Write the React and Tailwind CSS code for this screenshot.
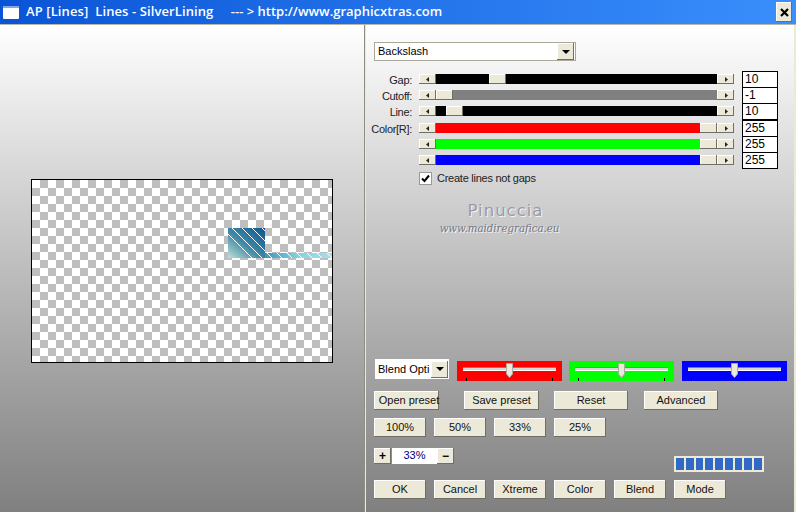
const bevel = 'bg-[#ece9d8] shadow-[inset_-1px_-1px_0_#716f64,inset_1px_1px_0_#fff]'

function Btn({ label, className = 'w-[52px]' }) {
  return (
    <button className={`h-[19px] flex items-center justify-center whitespace-nowrap text-[11px] text-[#111] ${bevel} ${className}`}>
      {label}
    </button>
  )
}

function Arrow({ dir }) {
  return (
    <div className={`w-[17px] h-[10px] flex items-center justify-center ${bevel}`}>
      <svg width="4" height="5" viewBox="0 0 4 5">
        <path d={dir === 'left' ? 'M3 0V5L0 2.5Z' : 'M1 0V5L4 2.5Z'} fill="#222" />
      </svg>
    </div>
  )
}

function Slider({ label, value, before, color, top }) {
  return (
    <div className={`flex h-4 items-start ${top}`}>
      <div className="w-[45px] whitespace-nowrap text-right text-[11px] leading-[12px] tracking-[-0.3px] text-[#222]">{label}</div>
      <div className="ml-[7px] mt-0 flex w-[315px] items-center">
        <Arrow dir="left" />
        <div className={`flex h-[10px] flex-1 ${color}`}>
          <div style={{ width: before }} />
          <div className={`w-[17px] h-[10px] ${bevel}`} />
        </div>
        <Arrow dir="right" />
      </div>
      <div className="ml-2 -mt-[3px] h-[17px] w-9 border border-black bg-white pl-[2px] text-[12px] leading-[15px] text-black">
        {value}
      </div>
    </div>
  )
}

function Track({ color, left }) {
  return (
    <div className={`relative h-5 w-[105px] ${color}`}>
      <div className="absolute left-[6px] top-[6px] h-1 w-[93px] bg-[#d8d8d0] shadow-[inset_0_1px_0_#808080,inset_0_-1px_0_#fff]" />
      <svg className="absolute top-[2px]" style={{ left }} width="7" height="15" viewBox="0 0 7 15">
        <path d="M.5.5H6.5V11L3.5 14.5L.5 11Z" fill="#ece9d8" stroke="#aaa" />
      </svg>
      <div className="absolute left-[9px] bottom-0 h-[3px] w-px bg-black" />
      <div className="absolute left-[95px] bottom-0 h-[3px] w-px bg-black" />
    </div>
  )
}

function Canvas() {
  const lines = [196, 206, 216, 226, 236, 246, 256, 266, 276, 286, 296]
  return (
    <div className="h-[184px] w-[302px] border border-black bg-white bg-[conic-gradient(#bebebe_25%,#fff_0_50%,#bebebe_0_75%,#fff_0)] bg-[size:16px_16px]">
      <svg width="300" height="182" viewBox="0 0 300 182" className="block">
        <defs>
          <linearGradient id="square" x1="0" y1="1" x2="1" y2="0">
            <stop offset="0" stopColor="#bfe0d4" />
            <stop offset="0.45" stopColor="#3f8aa8" />
            <stop offset="1" stopColor="#0b5590" />
          </linearGradient>
          <linearGradient id="strip" x1="0" y1="0" x2="1" y2="0">
            <stop offset="0" stopColor="#3f97bf" />
            <stop offset="0.5" stopColor="#7fd4ea" />
            <stop offset="1" stopColor="#a4e0ea" />
          </linearGradient>
          <clipPath id="art">
            <path d="M196 48H233V73H300V78H196Z" />
          </clipPath>
        </defs>
        <rect x="196" y="48" width="37" height="30" fill="url(#square)" />
        <rect x="233" y="73" width="67" height="5" fill="url(#strip)" />
        <g clipPath="url(#art)" stroke="#fff" strokeWidth="1">
          {lines.map((x) => (
            <path key={x} d={`M${x - 16} 38L${x + 30} 84`} />
          ))}
        </g>
      </svg>
    </div>
  )
}

export default function App() {
  return (
    <div className="h-[512px] w-[796px] overflow-hidden bg-[#ece9d8] font-['Liberation_Sans',sans-serif]">
      <div className="flex h-6 items-center bg-gradient-to-r from-[#0a54d6] to-[#3a8ffc] pl-[3px] pr-[4px]">
        <svg width="16" height="13" viewBox="0 0 16 13">
          <rect width="16" height="13" rx="1" fill="#fff" />
          <rect width="16" height="2" fill="#7fa8e8" />
        </svg>
        <div className="ml-[7px] whitespace-pre font-['Open_Sans',sans-serif] text-[13px] font-semibold text-white">
          <span className="tracking-[0.1px]">AP [Lines]  Lines - SilverLining     </span>
          --- &gt; http://www.graphicxtras.com
        </div>
        <div className={`ml-auto flex h-5 w-4 items-center justify-center ${bevel}`}>
          <svg width="9" height="9" viewBox="0 0 9 9">
            <path d="M1 1L8 8M8 1L1 8" stroke="#000" strokeWidth="2.2" />
          </svg>
        </div>
      </div>
      <div className="flex h-[488px] border-t border-[#b8b6a8] pr-[2px]">
        <div className="h-full w-[365px] border-r border-[#8c8c84] bg-gradient-to-b from-white to-[#808080] pl-[31px] pt-[154px]">
          <Canvas />
        </div>
        <div className="h-full flex-1 border-l border-[#ece9d8] bg-gradient-to-b from-white to-[#808080] pl-2">
          <div className="mt-[17px] flex h-[19px] w-[202px] items-center justify-between border border-[#aca899] bg-white pl-[3px] pr-px text-[11px] text-black">
            Backslash
            <div className={`flex h-[17px] w-[17px] items-center justify-center ${bevel}`}>
              <svg width="8" height="4" viewBox="0 0 8 4"><path d="M0 0H8L4 4Z" fill="#000" /></svg>
            </div>
          </div>
          <div className="-ml-[7px]">
            <Slider label="Gap:" value="10" before={53} color="bg-black" top="mt-[13px]" />
            <Slider label="Cutoff:" value="-1" before={0} color="bg-[#808080]" />
            <Slider label="Line:" value="10" before={10} color="bg-black" />
            <Slider label="Color[R]:" value="255" before={264} color="bg-[#ff0000]" top="mt-px" />
            <Slider label="" value="255" before={264} color="bg-[#00ff00]" />
            <Slider label="" value="255" before={264} color="bg-[#0000ff]" />
          </div>
          <div className="ml-[45px] flex h-[14px] items-center text-[11px] tracking-[-0.25px] text-[#222]">
            <div className="flex h-[13px] w-[13px] items-center justify-center border border-[#999] bg-white">
              <svg width="9" height="9" viewBox="0 0 9 9"><path d="M1 4.5L3.5 7L8 1.5" fill="none" stroke="#000" strokeWidth="2" /></svg>
            </div>
            <span className="ml-[5px]">Create lines not gaps</span>
          </div>
          <div className="ml-[65px] mt-[16px] w-[121px] text-center text-[#9a9aa6] [text-shadow:1px_1px_0_#f4f4f4]">
            <div className="ml-3 text-[16.5px] leading-[20px] tracking-[1px] font-['DejaVu_Sans',sans-serif]">Pinuccia</div>
            <div className="mt-[2px] whitespace-nowrap text-[10.2px] leading-[12px] italic text-[#777782] font-['DejaVu_Serif',serif]">www.maidiregrafica.eu</div>
          </div>
          <div className="mt-[124px] flex items-start">
            <div className="ml-px flex h-5 w-[74px] items-center border border-white bg-white pl-[2px] text-[11px] text-black">
              <span className="w-[53px] overflow-hidden whitespace-nowrap">Blend Opti</span>
              <div className={`flex h-[17px] w-[17px] shrink-0 items-center justify-center ${bevel}`}>
                <svg width="8" height="4" viewBox="0 0 8 4"><path d="M0 0H8L4 4Z" fill="#000" /></svg>
              </div>
            </div>
            <div className="ml-2 mt-[2px] flex gap-[7px]">
              <Track color="bg-[#ff0000]" left={49} />
              <div className="ml-0"><Track color="bg-[#00ff00]" left={49} /></div>
              <div className="ml-px"><Track color="bg-[#0000ff]" left={49} /></div>
            </div>
          </div>
          <div className="mt-[10px] flex">
            <Btn label="Open preset" className="w-[65px] pl-[5px]" />
            <Btn label="Save preset" className="ml-[25px] w-[75px]" />
            <Btn label="Reset" className="ml-[15px] w-[74px]" />
            <Btn label="Advanced" className="ml-4 w-[74px]" />
          </div>
          <div className="mt-2 flex gap-2">
            <Btn label="100%" />
            <Btn label="50%" />
            <Btn label="33%" />
            <Btn label="25%" />
          </div>
          <div className="mt-[11px] flex h-4">
            <button className={`h-4 w-[17px] text-[12px] font-bold leading-[14px] ${bevel}`}>+</button>
            <div className="ml-px h-4 w-[45px] bg-white text-center text-[11px] leading-[15px] text-[#000080]">33%</div>
            <button className={`h-4 w-[17px] text-[12px] font-bold leading-[14px] ${bevel}`}>−</button>
          </div>
          <div className="ml-[300px] -mt-2 flex h-4 w-[90px] gap-[2px] bg-[#ece9d8] p-[2px]">
            {[1, 2, 3, 4, 5, 6, 7, 8, 9].map((n) => (
              <div key={n} className="h-3 w-2 flex-1 bg-[#316ac5]" />
            ))}
          </div>
          <div className="mt-2 flex gap-2">
            {['OK', 'Cancel', 'Xtreme', 'Color', 'Blend', 'Mode'].map((label) => (
              <Btn key={label} label={label} />
            ))}
          </div>
        </div>
      </div>
    </div>
  )
}
